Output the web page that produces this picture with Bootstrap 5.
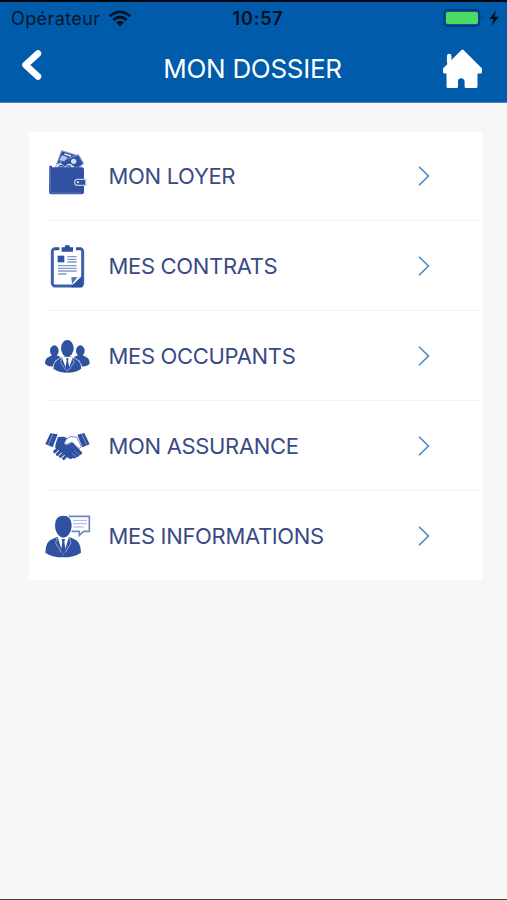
<!DOCTYPE html>
<html lang="fr">
<head>
<meta charset="utf-8">
<meta name="viewport" content="width=device-width, initial-scale=1">
<title>Mon dossier</title>
<link href="https://cdn.jsdelivr.net/npm/bootstrap@5.3.0/dist/css/bootstrap.min.css" rel="stylesheet">
<style>
  body { font-family: Inter, "Liberation Sans", sans-serif; background: #f7f7f7; height: 900px; border-bottom: 1px solid #444; overflow: hidden; }
  svg { display: block; flex: none; }
  .app-header { height: 103px; background: #005baa; border-top: 2px solid #000814; border-bottom: 1px solid #4c86bd; }
  .status-bar { height: 33px; padding: 1px 5px 0 11px; color: #04182f; font-size: 18px; line-height: 32px; }
  .status-bar .side { flex: 1 1 0; }
  .carrier { letter-spacing: .4px; }
  .clock { font-weight: 600; color: #03101f; letter-spacing: .8px; margin-left: 3px; }
  .title-bar { height: 66px; padding: 1px 25px 0 20px; }
  .title-bar h1 { font-size: 26px; font-weight: 400; line-height: 66px; letter-spacing: -.3px; padding-left: 19px; }
  .menu-card { margin: 29px 25px 0 29px; padding-left: 11px; background: #fff; }
  .menu-item { height: 90px; color: #3a4a86; font-size: 22px; letter-spacing: -.33px; }
  .menu-item:first-child { height: 88px; }
  .menu-item + .menu-item { padding-top: 2px; background: linear-gradient(#f4f4f5, #f4f4f5) 8px 0 / 433px 1px no-repeat; }
  .menu-item .pict { margin-right: 12.5px; fill: #2f51a0; }
  .menu-item .go { margin-right: 51px; }
</style>
</head>
<body>
<header class="app-header">
  <div class="status-bar d-flex align-items-center">
    <div class="side d-flex align-items-center">
      <span class="carrier">Opérateur</span>
      <svg class="ms-2" width="24" height="18" viewBox="0 0 24 18" fill="none" stroke="#03101f" stroke-width="2.7"><path d="M1.7 6.3Q12 -2.5 22.3 6.3M5.2 10Q12 4 18.8 10"/><path d="M8 12.3Q12 9 16 12.3L12 16.2Z" fill="#03101f" stroke="none"/></svg>
    </div>
    <span class="clock">10:57</span>
    <div class="side d-flex align-items-center justify-content-end">
      <svg class="mb-1" width="59" height="20" viewBox="0 0 59 20"><rect x="1.2" y="3" width="35" height="16" rx="3.5" fill="none" stroke="#063c78" stroke-width="1.8"/><rect x="3" y="5" width="32" height="12" rx="1.8" fill="#4cd964"/><path d="M38.8 8.5q2.2 2.5 0 5z" fill="#063c78"/><path d="M53 3.5L46.4 12h4.2l-2.3 7L56 9.7h-4.4z" fill="#03101f"/></svg>
    </div>
  </div>
  <div class="title-bar d-flex align-items-center justify-content-between text-white">
    <svg class="mb-2" width="24" height="34" viewBox="0 0 24 34" fill="none" stroke="#fff" stroke-width="6.5" stroke-linecap="round" stroke-linejoin="round"><path d="M18 5.5L5.5 17L18 28.5"/></svg>
    <h1 class="m-0">MON DOSSIER</h1>
    <svg width="40" height="40" viewBox="0 0.5 40 40" fill="#fff" stroke="#fff" stroke-width="3" stroke-linejoin="round"><path d="M20.5 2.5L2.5 20.5V23.5H6V38H14.5V33a4.8 4.8 0 0 1 9.6 0V38H34V23.5H38.5V20.5Z"/><path d="M7.2 7.5V14" stroke-linecap="round" stroke-width="4.5"/></svg>
  </div>
</header>

<main class="menu-card">
  <div class="menu-item d-flex align-items-center">
    <svg class="pict" width="56" height="56" viewBox="0 9 168 168">
      <g stroke="#8fa3d4" stroke-width="3">
        <path d="M65 17L118 33 130 56 118 68H46Z"/>
        <path d="M62 49L115 29 130 55 116 67H60Z"/>
      </g>
      <path d="M66 31l16 5-9 13-15-3z" fill="#b9c6e6"/><circle cx="101" cy="49" r="8" fill="#d5def0"/><path d="M73 27l20 6M88 61l14 5" stroke="#dfe6f4" stroke-width="4"/>
      <path d="M47 66q4-14 18-10l10 9 8-8q14-3 17 11z" fill="#dbe3f2"/><path d="M57 66q5-9 14 0M80 66q6-9 12 1" fill="none" stroke="#2f51a0" stroke-width="4"/>
      <path d="M28 62h8v5h90q6 0 6 6v68q0 7-7 7H34q-7 0-7-7z"/>
      <path d="M31 70V139q0 5 6 5H123" fill="none" stroke="#6f88c4" stroke-width="2"/>
      <path d="M137 103h-25q-8 0-8 9t8 9h25z" stroke="#b9c6e6" stroke-width="4"/><circle cx="114" cy="112" r="3" fill="#fff"/>
    </svg>
    <span class="flex-grow-1">MON LOYER</span>
    <svg class="go" width="14" height="22" viewBox="0 0 14 22" fill="none" stroke="#4585c0" stroke-width="1.5"><path d="M2 1.8L11.5 11 2 20.2"/></svg>
  </div>
  <div class="menu-item d-flex align-items-center">
    <svg class="pict" width="56" height="56" viewBox="0 0 168 168">
      <rect x="37" y="32" width="91" height="112" rx="8" fill="#fff" stroke="#3f60aa" stroke-width="9"/>
      <path d="M45 27H120V42H45Z" fill="#fff"/><path d="M44 28h14v9H44zM108 28h14v9h-14z"/>
      <path d="M65 28h9q0-7 8-7t8 7h9v13H65z"/><rect x="53" y="53" width="20" height="20"/>
      <path d="M82 56h28M82 64h28M82 72h28M54 83h56M54 91h56M54 99h56M54 108h26" stroke="#8498cb" stroke-width="4"/>
      <path d="M94 145L128 112V148H94Z"/><path d="M96 139L94 118 113 117Z" fill="#5974b8"/>
    </svg>
    <span class="flex-grow-1">MES CONTRATS</span>
    <svg class="go" width="14" height="22" viewBox="0 0 14 22" fill="none" stroke="#4585c0" stroke-width="1.5"><path d="M2 1.8L11.5 11 2 20.2"/></svg>
  </div>
  <div class="menu-item d-flex align-items-center">
    <svg class="pict" width="56" height="56" viewBox="0 0 168 168">
      <ellipse cx="43" cy="68" rx="13" ry="16"/><ellipse cx="121" cy="68" rx="13" ry="16"/>
      <path d="M15 107q0-16 11-20l11-6h12l14 7-17 10-9 18q-16-2-22-9zM149 107q0-16-11-20l-11-6h-12l-14 7 17 10 9 18q16-2 22-9z"/>
      <path d="M40 122q1-24 19-30l15-7h16l15 7q18 6 19 30-16 12-42 12T40 122z"/>
      <path d="M65 87L82 132 99 87Z" fill="#fff"/><path d="M78 91h8l-2 8 4 19-6 12-6-12 4-19z"/>
      <ellipse cx="82" cy="61" rx="19" ry="25"/><path d="M67 88l-5 15 14 22M97 88l5 15-14 22" fill="none" stroke="#a3b3da" stroke-width="2.5"/>
    </svg>
    <span class="flex-grow-1">MES OCCUPANTS</span>
    <svg class="go" width="14" height="22" viewBox="0 0 14 22" fill="none" stroke="#4585c0" stroke-width="1.5"><path d="M2 1.8L11.5 11 2 20.2"/></svg>
  </div>
  <div class="menu-item d-flex align-items-center">
    <svg class="pict" width="56" height="56" viewBox="0 0 168 168">
      <path d="M31 46L53 49 38 88 16 78ZM133 45L112 50 127 88 149 79Z"/>
      <path d="M38 50L25 80M126 50L140 80" stroke="#8fa3d4" stroke-width="2.5"/>
      <path d="M54 57L72 56 82 61 73 75q4 8 14 3l10-5 29 30q2 7-7 8-2 7-9 6-4 7-11 3-6 6-14 0l-11-7-29-25 3-14z"/>
      <path d="M80 62l13-7 18 3 13 28-7 6-21-20-12 6q-9 3-11-2z" fill="#fff" stroke="#6f88c4" stroke-width="3"/>
      <path d="M44 101l8-8M52 109l9-9M61 115l9-8M71 121l7-7" stroke="#2f51a0" stroke-width="9" stroke-linecap="round"/>
      <path d="M48 105l9-8M58 112l8-8M68 118l7-7" stroke="#dce4f3" stroke-width="2.3"/><path d="M96 106l13 10M103 98l13 11" stroke="#8fa3d4" stroke-width="2"/>
    </svg>
    <span class="flex-grow-1">MON ASSURANCE</span>
    <svg class="go" width="14" height="22" viewBox="0 0 14 22" fill="none" stroke="#4585c0" stroke-width="1.5"><path d="M2 1.8L11.5 11 2 20.2"/></svg>
  </div>
  <div class="menu-item d-flex align-items-center">
    <svg class="pict" width="56" height="56" viewBox="0 0 168 168">
      <path d="M87 25H148V70H131L118 82V70H95" fill="#fff" stroke="#6d85c2" stroke-width="5"/>
      <path d="M99 37h42M99 47h42M101 57h32" stroke="#a5b4da" stroke-width="3"/>
      <path d="M16 134q0-36 23-42l17-7h27l17 7q23 6 23 42-20 14-54 14T16 134z"/>
      <path d="M52 84L70 142 88 84Z" fill="#fff"/><path d="M65 93h10l-2 9 4 25-7 13-7-13 4-25z"/>
      <path d="M52 87l-5 18 17 28M88 87l5 18-17 28" fill="none" stroke="#a3b3da" stroke-width="2.5"/>
      <path d="M70 23q25 0 25 29 0 17-10 29-7 8-15 8t-15-8Q45 69 45 52q0-29 25-29z"/>
    </svg>
    <span class="flex-grow-1">MES INFORMATIONS</span>
    <svg class="go" width="14" height="22" viewBox="0 0 14 22" fill="none" stroke="#4585c0" stroke-width="1.5"><path d="M2 1.8L11.5 11 2 20.2"/></svg>
  </div>
</main>
<script src="https://cdn.jsdelivr.net/npm/bootstrap@5.3.0/dist/js/bootstrap.bundle.min.js"></script>
</body>
</html>
